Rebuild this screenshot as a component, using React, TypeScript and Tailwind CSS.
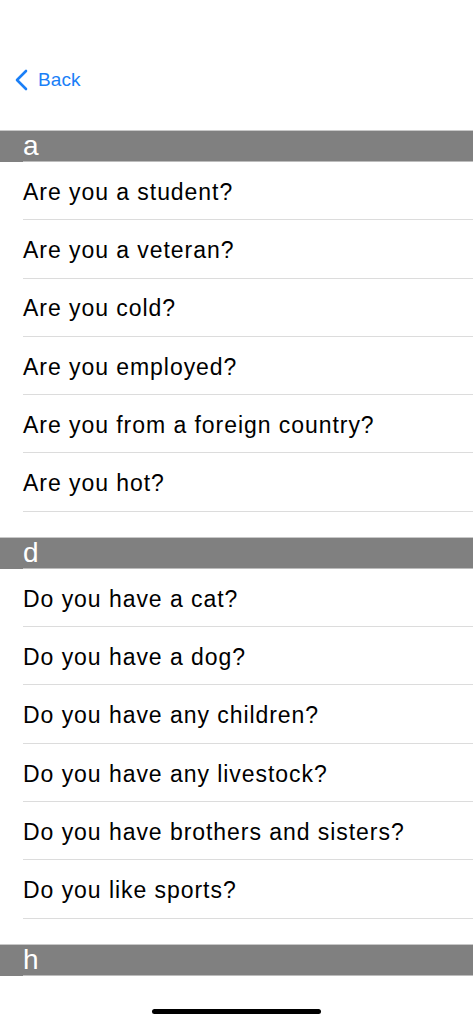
import React from 'react';

const sections: { letter: string; items: string[] }[] = [
  {
    letter: 'a',
    items: [
      'Are you a student?',
      'Are you a veteran?',
      'Are you cold?',
      'Are you employed?',
      'Are you from a foreign country?',
      'Are you hot?',
    ],
  },
  {
    letter: 'd',
    items: [
      'Do you have a cat?',
      'Do you have a dog?',
      'Do you have any children?',
      'Do you have any livestock?',
      'Do you have brothers and sisters?',
      'Do you like sports?',
    ],
  },
  { letter: 'h', items: [] },
];

const SectionHeader = ({ letter }: { letter: string }) => (
  <div className="relative h-[32px] bg-[#808080] border-t border-[#c8c8c8]">
    <span className="block pl-[23px] text-[28px] leading-[30px] text-white">{letter}</span>
    <div className="absolute left-[23px] right-0 bottom-0 h-px bg-[#bcbcbc]" />
  </div>
);

export default function App() {
  return (
    <div
      className="relative w-[473px] h-[1024px] overflow-hidden bg-white"
      style={{ fontFamily: '"Liberation Sans", Arial, sans-serif' }}
    >
      {/* nav bar */}
      <div className="h-[130px] flex items-end pb-[38px]">
        <button className="flex items-center pl-[15px] text-[#1a7ff7]">
          <svg width="13" height="22" viewBox="0 0 13 22" fill="none" className="mr-[10px]">
            <path d="M11 2 L2 11 L11 20" stroke="currentColor" strokeWidth="2.6" strokeLinecap="round" strokeLinejoin="round" />
          </svg>
          <span className="text-[19px] leading-[24px] tracking-[0.1px]">Back</span>
        </button>
      </div>

      {sections.map((section) => (
        <div key={section.letter}>
          <SectionHeader letter={section.letter} />
          {section.items.length > 0 && (
            <ul className="mb-[25px]">
              {section.items.map((item) => (
                <li key={item} className="pl-[23px]">
                  <div className="h-[58.3px] flex items-center pt-[3px] border-b border-[#dcdcdc] text-[23px] tracking-[0.95px] text-black">
                    {item}
                  </div>
                </li>
              ))}
            </ul>
          )}
        </div>
      ))}

      {/* home indicator */}
      <div className="absolute left-[152px] top-[1009px] w-[169px] h-[5px] rounded-full bg-black" />
    </div>
  );
}
